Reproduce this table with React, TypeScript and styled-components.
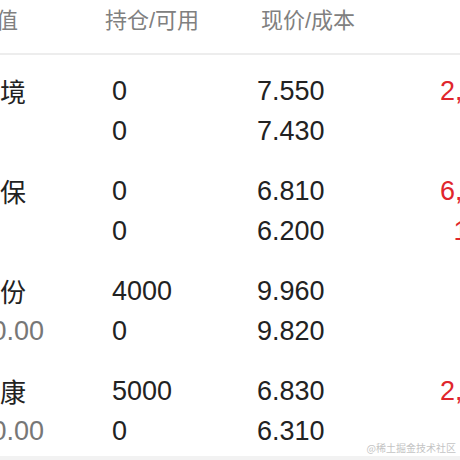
import React from "react";
import styled, { createGlobalStyle } from "styled-components";

const GlobalStyle = createGlobalStyle`
  html, body {
    margin: 0;
    padding: 0;
    background: #f2f2f2;
    overflow: hidden;
  }
  body {
    font-family: "Liberation Sans", "Noto Sans CJK SC", sans-serif;
  }
`;

const Viewport = styled.div`
  position: relative;
  width: 460px;
  height: 456px;
  overflow: hidden;
  background: #ffffff;
`;

const Table = styled.div`
  width: 623px;
  margin-left: -78px;
`;

const COLS = "190px 145px 140px 148px";

const HeaderRow = styled.div`
  display: grid;
  grid-template-columns: ${COLS};
  height: 53px;
  align-items: center;
  border-bottom: 2px solid #ededed;
`;

const HeadCell = styled.div<{ $shift?: number; $right?: boolean }>`
  font-size: 22px;
  color: #808080;
  margin-left: ${(p) => p.$shift ?? 0}px;
  text-align: ${(p) => (p.$right ? "right" : "left")};
  white-space: nowrap;
  margin-top: -18px;
`;

const Body = styled.div`
  padding-top: 6.5px;
`;

const Group = styled.div`
  display: grid;
  grid-template-columns: ${COLS};
  grid-auto-rows: 39.5px;
  padding: 10.5px 0;
  align-items: center;
`;

const Name = styled.div`
  font-size: 26px;
  color: #222222;
  white-space: nowrap;
  margin-top: -3px;
`;

const MarketValue = styled.div`
  font-size: 27px;
  color: #777777;
  text-align: right;
  padding-right: 68px;
  white-space: nowrap;
`;

const Num = styled.div`
  font-size: 27px;
  color: #222222;
  white-space: nowrap;
`;

const Profit = styled.div<{ $up?: boolean }>`
  font-size: 27px;
  color: ${(p) => (p.$up ? "#e0262c" : "#1a9c3c")};
  text-align: right;
  white-space: nowrap;
`;

const Watermark = styled.div`
  position: absolute;
  right: 4px;
  bottom: 1px;
  font-size: 10px;
  line-height: 14px;
  color: #c4c4c4;
  font-family: "Noto Sans CJK SC", sans-serif;
  text-shadow: 0 0 2px #fff, 0 0 2px #fff;
`;

type Row = {
  name: string;
  value: string;
  hold: string;
  avail: string;
  price: string;
  cost: string;
  profit: string;
  rate: string;
  up: boolean;
};

const rows: Row[] = [
  { name: "中持环境", value: "", hold: "0", avail: "0", price: "7.550", cost: "7.430", profit: "2,960.00", rate: "1.62%", up: true },
  { name: "瀚蓝环保", value: "", hold: "0", avail: "0", price: "6.810", cost: "6.200", profit: "6,100.00", rate: "10.45%", up: true },
  { name: "东方股份", value: "39800.00", hold: "4000", avail: "0", price: "9.960", cost: "9.820", profit: "56.00", rate: "0.56%", up: true },
  { name: "国药健康", value: "34100.00", hold: "5000", avail: "0", price: "6.830", cost: "6.310", profit: "2,600.00", rate: "8.24%", up: true },
];

export default function App() {
  return (
    <>
      <GlobalStyle />
      <Viewport>
        <Table>
          <HeaderRow>
            <HeadCell $shift={2}>名称/市值</HeadCell>
            <HeadCell $shift={-7}>持仓/可用</HeadCell>
            <HeadCell $shift={4}>现价/成本</HeadCell>
            <HeadCell $right>盈亏</HeadCell>
          </HeaderRow>
          <Body>
            {rows.map((r) => (
              <Group key={r.name}>
                <Name>{r.name}</Name>
                <Num>{r.hold}</Num>
                <Num>{r.price}</Num>
                <Profit $up={r.up}>{r.profit}</Profit>
                <MarketValue>{r.value}</MarketValue>
                <Num>{r.avail}</Num>
                <Num>{r.cost}</Num>
                <Profit $up={r.up}>{r.rate}</Profit>
              </Group>
            ))}
          </Body>
        </Table>
        <Watermark>@稀土掘金技术社区</Watermark>
      </Viewport>
    </>
  );
}
